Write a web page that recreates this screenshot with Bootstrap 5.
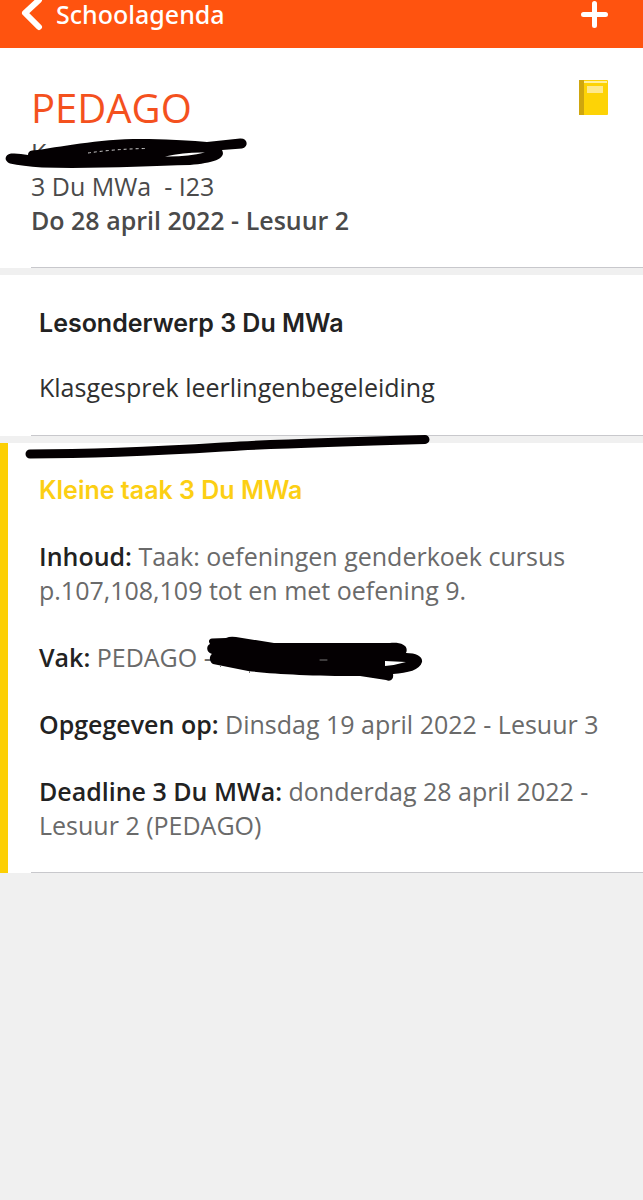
<!DOCTYPE html>
<html lang="nl">
<head>
<meta charset="utf-8">
<meta name="viewport" content="width=device-width, initial-scale=1">
<title>Schoolagenda</title>
<link href="https://cdn.jsdelivr.net/npm/bootstrap@5.3.0/dist/css/bootstrap.min.css" rel="stylesheet">
<style>
body{background:#f0f0f0;font-family:"Open Sans","Noto Sans",sans-serif;font-size:25px;line-height:34px;color:#6a6a6a}
.topbar{background:#ff530f;height:48px;padding:0 32px 16px 20px}
.topbar a,.topbar button{color:#fff;background:none;border:0;padding:0;text-decoration:none;font-family:"Noto Sans","Open Sans",sans-serif;font-size:25px;line-height:28px;font-weight:500}
.panel{position:relative;background:#fff;margin-bottom:7px}
.panel::after{content:"";display:block;height:1px;margin-left:31px;background:#c8c8cc}
.lesson{padding:32px 32px 30px 31px;color:#4a4a4a}
.subject{font-size:40px;line-height:55px;font-weight:400;color:#f4511e;margin:0}
.when{font-weight:600}
.heading{font-family:Inter,"Open Sans",sans-serif;font-size:25px;line-height:32px;font-weight:600;color:#222;margin:0}
.inner{display:grid}
.topic .inner{gap:31px;padding:32px 39px 31px;color:#303030}
.task{border-left:8px solid #fccf03}
.task::after{margin-left:23px}
.task .inner{gap:33px;padding:31px 40px 30px 31px}
.task .heading{color:#fccf14}
.task strong{font-weight:600;color:#222}
.scribble{position:absolute;overflow:visible;pointer-events:none;z-index:1}
.hide-name{left:-25px;top:1px}
.hide-teacher{left:100%;top:-4px;margin-left:-2px}
.underline-mark{left:17px;top:-9px}
</style>
</head>
<body>
<header class="topbar d-flex align-items-start justify-content-between">
  <a href="#" class="d-flex">
    <svg width="24" height="32" viewBox="0 0 24 32" fill="none" stroke="#fff" stroke-width="6" stroke-linecap="round" stroke-linejoin="round"><path d="M19 0 5 13l14 14"/></svg>
    <span class="ms-2 ps-1 d-block">Schoolagenda</span>
  </a>
  <button type="button" aria-label="Toevoegen" class="d-flex">
    <svg width="32" height="32" viewBox="0 0 32 32" stroke="#fff" stroke-width="5" stroke-linecap="round"><path d="M15.500 3.500v22M4.500 14.500h22"/></svg>
  </button>
</header>
<main>
  <section class="panel">
    <div class="lesson d-flex justify-content-between align-items-start">
      <div>
        <h1 class="subject">PEDAGO</h1>
        <div class="position-relative">K
          <svg class="scribble hide-name" width="242" height="34" viewBox="6 136 242 34" fill="#040002"><path fill-rule="evenodd" d="M11 153.500Q19 153 28 155Q28 151 32 150.500C62 147 100 138 149 139Q185 140 207 142L240 138.500C248 138 249 147 242 148.500L222 150C227 159 212 163 190 165C150 166 92 169 42 167.500Q22 166 10 163.500C4 161 4 155 11 153.500ZM165 156.500Q187 157 205 152.500Q185 152 165 156.500Z"/><path d="M88 153Q115 149 146 148.500" fill="none" stroke="#ccc" stroke-dasharray="3 3"/></svg>
        </div>
        <div>3 Du MWa &nbsp;- I23</div>
        <div class="when">Do 28 april 2022 - Lesuur 2</div>
      </div>
      <svg width="36" height="38" viewBox="575 80 36 38"><rect x="579" y="80" width="29" height="35" rx="1" fill="#fdd306"/><path d="M579 80h5v35h-5z" fill="#cfa60e"/><path d="M584 81h23v2h-23z" fill="#fff0a0"/><path d="M587 86h16v7h-16z" fill="#fee98d"/></svg>
    </div>
  </section>
  <section class="panel topic">
    <div class="inner">
      <h2 class="heading">Lesonderwerp 3 Du MWa</h2>
      <div>Klasgesprek leerlingenbegeleiding</div>
    </div>
  </section>
  <section class="panel task">
    <svg class="scribble underline-mark" width="404" height="25" viewBox="25 434 404 25"><path d="M30 454C120 454 190 449 240 446C300 443 370 441 425 439.500" fill="none" stroke="#040002" stroke-width="9" stroke-linecap="round"/></svg>
    <div class="inner">
      <h2 class="heading">Kleine taak 3 Du MWa</h2>
      <div><strong>Inhoud:</strong> Taak: oefeningen genderkoek cursus p.107,108,109 tot en met oefening 9.</div>
      <div><span class="position-relative"><strong>Vak:</strong> PEDAGO -<svg class="scribble hide-teacher" width="216" height="44" viewBox="210 636 216 44"><path fill="#040002" fill-rule="evenodd" d="M212 638.500L226 638Q230 636 236 637L274 643H390C402 642 409 646 406 653C417 653 423 657 422 662C420 670 408 673 393 674C394 679 391 682 386 680L360 676C310 676 275 674 248 671L213 664C209 662 209 656 212 654C206 652 206 646 210 644C208 641 209 639 212 638.500ZM385 661V666Q396 665 406 662Z"/><path d="M320 660h7" stroke="#777" stroke-linecap="round"/><path d="M220.500 665v2M249.500 671v2" stroke="#777"/></svg></span></div>
      <div><strong>Opgegeven op:</strong> Dinsdag 19 april 2022 - Lesuur 3</div>
      <div><strong>Deadline 3 Du MWa:</strong> donderdag 28 april 2022 - Lesuur 2 (PEDAGO)</div>
    </div>
  </section>
</main>
<script src="https://cdn.jsdelivr.net/npm/bootstrap@5.3.0/dist/js/bootstrap.bundle.min.js"></script>
</body>
</html>
